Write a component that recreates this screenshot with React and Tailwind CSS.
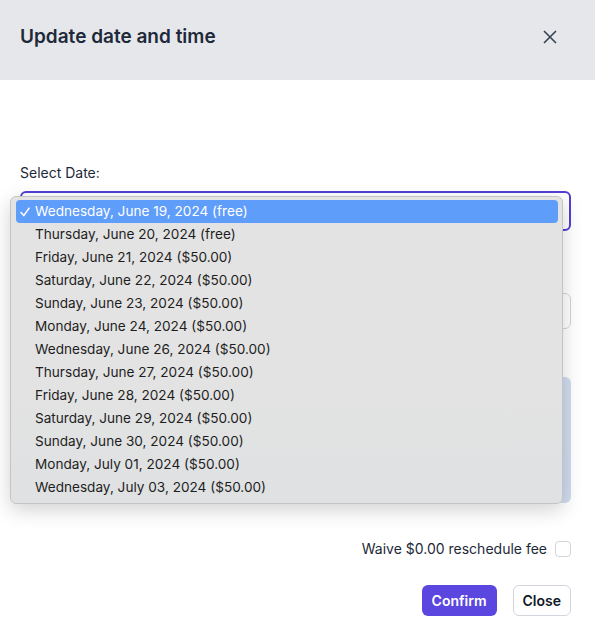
import React from "react";

const dates = [
  "Wednesday, June 19, 2024 (free)",
  "Thursday, June 20, 2024 (free)",
  "Friday, June 21, 2024 ($50.00)",
  "Saturday, June 22, 2024 ($50.00)",
  "Sunday, June 23, 2024 ($50.00)",
  "Monday, June 24, 2024 ($50.00)",
  "Wednesday, June 26, 2024 ($50.00)",
  "Thursday, June 27, 2024 ($50.00)",
  "Friday, June 28, 2024 ($50.00)",
  "Saturday, June 29, 2024 ($50.00)",
  "Sunday, June 30, 2024 ($50.00)",
  "Monday, July 01, 2024 ($50.00)",
  "Wednesday, July 03, 2024 ($50.00)",
];

export default function App() {
  return (
    <div className="relative h-[636px] w-full overflow-hidden bg-white font-['Inter',sans-serif] text-gray-800">
      {/* header */}
      <div className="flex h-20 items-center justify-between bg-gray-200 pb-[6px] pl-5 pr-[38px]">
        <h2 className="text-[19px] font-semibold text-gray-800">Update date and time</h2>
        <button type="button" aria-label="Close" className="text-gray-700">
          <svg width="14" height="14" viewBox="0 0 14 14" fill="none" stroke="currentColor" strokeWidth="1.6">
            <path d="M1 1L13 13M13 1L1 13" />
          </svg>
        </button>
      </div>

      {/* body */}
      <div className="pl-5 pr-6 pt-[83px]">
        <label className="mb-2 block text-sm text-gray-800">Select Date:</label>
        <div className="h-10 rounded-md border-2 border-[#5140d6]" />

        <div className="mt-[62px] h-9 rounded-md border border-gray-300" />

        <div className="mt-12 h-[126px] rounded-md bg-[#cfdcef]" />

        <div className="mt-[36px] flex items-center justify-end gap-2">
          <span className="text-sm text-gray-800">Waive $0.00 reschedule fee</span>
          <span className="h-4 w-4 rounded border border-gray-300 bg-white" />
        </div>

        <div className="mt-[26px] flex justify-end gap-4">
          <button type="button" className="h-[31px] rounded-md bg-[#5b46e0] px-[10px] text-sm font-semibold text-white">
            Confirm
          </button>
          <button type="button" className="h-[31px] rounded-md border border-gray-300 bg-white px-[9px] text-sm font-semibold text-gray-900">
            Close
          </button>
        </div>
      </div>

      {/* native select popup */}
      <div className="absolute left-[10px] top-[196px] w-[553px] rounded-md border border-[#c4c4c4] bg-gradient-to-b from-[#e3e3e3] from-60% to-[#dfe1e2] pb-[4px] pl-[5px] pr-[4px] pt-[3px] shadow-[0_6px_20px_rgba(0,0,0,0.18)]">
        {dates.map((d, i) => (
          <div
            key={d}
            className={
              i === 0
                ? "flex h-[23px] items-center rounded-[4px] bg-[#5f9dfb] text-[13.6px] text-white"
                : "flex h-[23px] items-center text-[13.6px] text-[#1e1e1e]"
            }
          >
            <span className="flex w-[19px] justify-end pr-[5px]">
              {i === 0 && (
                <svg width="10" height="10" viewBox="0 0 10 10" fill="none" stroke="currentColor" strokeWidth="1.5" strokeLinecap="round" strokeLinejoin="round">
                  <path d="M1 5.5L3.8 8.6L9 1.2" />
                </svg>
              )}
            </span>
            <span>{d}</span>
          </div>
        ))}
      </div>
    </div>
  );
}
